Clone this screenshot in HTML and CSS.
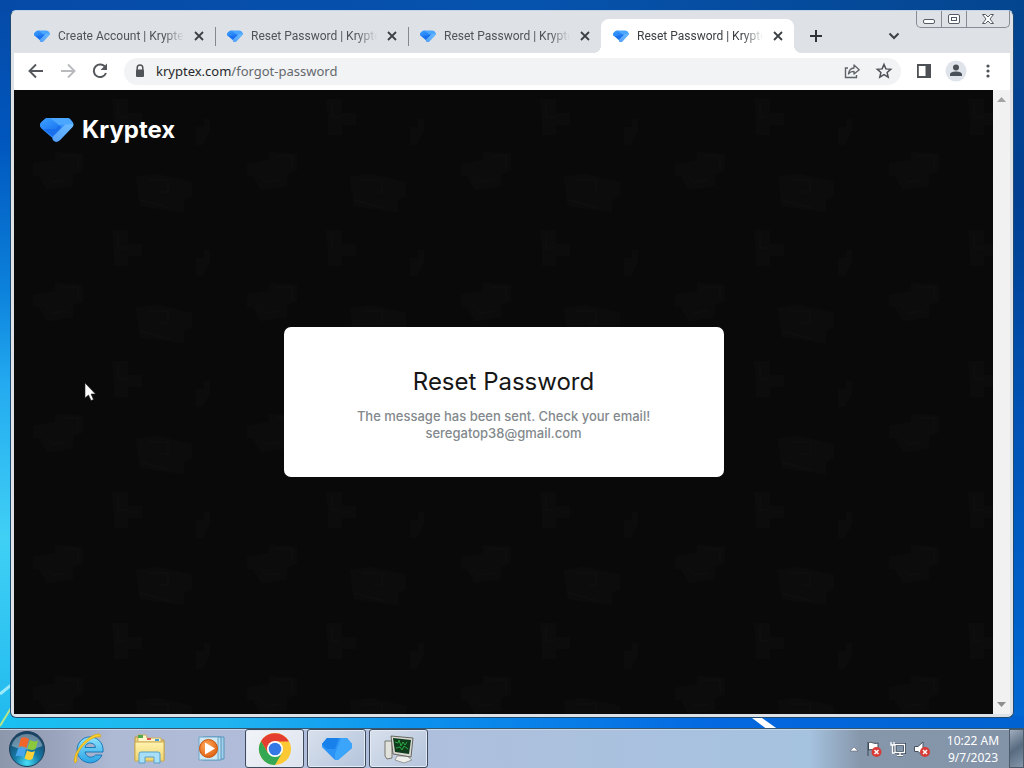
FILE: index.html
```html
<!DOCTYPE html>
<html lang="en">
<head>
<meta charset="utf-8">
<title>Reset Password | Kryptex</title>
<link rel="stylesheet" href="styles.css">
</head>
<body>
<svg class="defs" width="0" height="0" aria-hidden="true">
  <defs>
    <linearGradient id="kr" x1="1" y1="0" x2="0" y2="1"><stop offset="0" stop-color="#6abcff"/><stop offset="1" stop-color="#559ffb"/></linearGradient>
    <linearGradient id="kl" x1="0" y1="0" x2="1" y2="1"><stop offset="0" stop-color="#3fa2ff"/><stop offset="1" stop-color="#1b76f2"/></linearGradient>
    <symbol id="kryptex" viewBox="0 0 34 26">
      <path d="M7 1h20q2 0 3 1l2.500 3q2 2.500 0 5L20 23q-3 3-6 1-1.500-1-1.500-3L2 12q-2-2-2-4 0-1.500 1.500-3L5 2q1-1 2-1z" fill="#2f8ffc"/>
      <path d="M1 10q1 2 4 2h10l4-4 3 3-9 9z" fill="#1a6fec"/>
      <path d="M5 2q1-1 2-1h5l7 7-4 4H5q-5 0-5-4 0-1.500 1.500-3z" fill="url(#kl)"/>
      <path d="M10 1h17q2 0 3 1l2.500 3q1 1 .5 2.500L19 8z" fill="#4ba6ff"/>
      <path d="M33.300 7q.2 1.500-.8 3L20 23q-3 3-6 1-3-2.500 0-5.500L25 7.500z" fill="url(#kr)"/>
    </symbol>
    <symbol id="cross" viewBox="0 0 16 16"><path d="M4 4l8 8M12 4l-8 8" stroke="#3c4043" stroke-width="1.8" fill="none"/></symbol>
    <radialGradient id="orb" cx=".5" cy=".9" r=".8"><stop offset="0" stop-color="#48e0f8"/><stop offset=".45" stop-color="#167ba8"/><stop offset="1" stop-color="#174465"/></radialGradient>
    <radialGradient id="play" cx=".4" cy=".35" r=".7"><stop offset="0" stop-color="#ffad5c"/><stop offset="1" stop-color="#df5c0e"/></radialGradient>
    <linearGradient id="ie" x1="0" y1="0" x2="0" y2="1"><stop offset="0" stop-color="#8fe4ff"/><stop offset="1" stop-color="#2aa3e4"/></linearGradient>
    <linearGradient id="fold" x1="0" y1="0" x2="0" y2="1"><stop offset="0" stop-color="#fff3b0"/><stop offset="1" stop-color="#f0d46c"/></linearGradient>
  </defs>
</svg>

<main class="window">
  <div class="caption">
    <button class="cap" aria-label="Minimize"><svg width="14" height="12"><rect x="1.500" y="6.500" width="11" height="4" rx="1.500" fill="#fff" stroke="#555b66"/></svg></button>
    <button class="cap" aria-label="Restore"><svg width="14" height="12"><rect x="1.500" y="1.500" width="11" height="9" rx="1.500" fill="#fff" stroke="#555b66"/><rect x="4.500" y="4.500" width="5" height="3" fill="#fff" stroke="#555b66"/></svg></button>
    <button class="cap cap-close" aria-label="Close"><svg width="14" height="12"><path d="M1.500 1.500h3L7 4l2.500-2.500h3L9 6l3.500 4.500h-3L7 8l-2.500 2.500h-3L5 6z" fill="#fff" stroke="#555b66"/></svg></button>
  </div>
  <div class="tabs">
    <div class="tab"><svg class="fav"><use href="#kryptex"/></svg><span class="title">Create Account | Kryptex</span><button class="close" aria-label="Close tab"><svg width="16" height="16"><use href="#cross"/></svg></button></div>
    <div class="tab"><svg class="fav"><use href="#kryptex"/></svg><span class="title">Reset Password | Kryptex</span><button class="close" aria-label="Close tab"><svg width="16" height="16"><use href="#cross"/></svg></button></div>
    <div class="tab last"><svg class="fav"><use href="#kryptex"/></svg><span class="title">Reset Password | Kryptex</span><button class="close" aria-label="Close tab"><svg width="16" height="16"><use href="#cross"/></svg></button></div>
    <div class="tab active"><svg class="fav"><use href="#kryptex"/></svg><span class="title">Reset Password | Kryptex</span><button class="close" aria-label="Close tab"><svg width="16" height="16"><use href="#cross"/></svg></button></div>
    <button class="newtab" aria-label="New tab"><svg width="16" height="16"><path d="M8 2v12M2 8h12" stroke="#303338" stroke-width="2"/></svg></button>
    <button class="search" aria-label="Search tabs"><svg width="16" height="16"><path d="M3.500 5.500L8 10l4.500-4.500" fill="none" stroke="#3c4043" stroke-width="2"/></svg></button>
  </div>
  <div class="toolbar">
    <button aria-label="Back"><svg width="20" height="20"><path d="M17 10H4M10 3.500L3.500 10l6.500 6.500" fill="none" stroke="#54585d" stroke-width="1.900"/></svg></button>
    <button aria-label="Forward"><svg width="20" height="20"><path d="M3 10h13M10 3.500l6.500 6.500-6.500 6.500" fill="none" stroke="#b8babd" stroke-width="1.900"/></svg></button>
    <button aria-label="Reload"><svg width="20" height="20"><path d="M15.500 6.500A6.300 6.300 0 1 0 16 12" fill="none" stroke="#54585d" stroke-width="2"/><path d="M17 2.500V9h-6.500z" fill="#54585d"/></svg></button>
    <div class="omnibox">
      <svg width="16" height="16" aria-hidden="true"><path d="M5.200 7V4.800a2.800 2.800 0 0 1 5.600 0V7" fill="none" stroke="#505357" stroke-width="1.500"/><rect x="4" y="6.500" width="8" height="7.500" rx="1" fill="#505357"/></svg>
      <span class="url">kryptex.com<span class="path">/forgot-password</span></span>
      <button aria-label="Share"><svg width="18" height="18"><path d="M5 6H2.500v9.500h11V13" fill="none" stroke="#5f6368" stroke-width="1.400"/><path d="M5.500 12c.4-4 2.500-5.700 5.500-6V3l5.200 4.700L11 12V9.300c-2.500 0-4.200.7-5.500 2.700z" fill="none" stroke="#5f6368" stroke-width="1.300" stroke-linejoin="round"/></svg></button>
      <button aria-label="Bookmark"><svg width="18" height="18"><path d="M9 2.500l1.900 4.400 4.800.4-3.600 3.200 1.100 4.700L9 12.700l-4.200 2.500 1.100-4.700-3.600-3.200 4.800-.4z" fill="none" stroke="#4d5156" stroke-width="1.500"/></svg></button>
    </div>
    <button aria-label="Side panel"><svg width="18" height="18"><path d="M2.900 3h12.200v12H2.900z" fill="none" stroke="#4d5156" stroke-width="1.800"/><path d="M10.500 3H15v12h-4.500z" fill="#4d5156"/></svg></button>
    <button aria-label="Profile"><svg width="22" height="22"><circle cx="11" cy="11" r="10.500" fill="#dfe3ea"/><circle cx="11" cy="7.500" r="3" fill="#4a5057"/><path d="M5 16v-1.500c0-2.200 3.500-3 6-3s6 .8 6 3V16z" fill="#4a5057"/></svg></button>
    <button aria-label="Menu"><svg width="16" height="16"><g fill="#4d5156"><circle cx="8" cy="3" r="1.600"/><circle cx="8" cy="8" r="1.600"/><circle cx="8" cy="13" r="1.600"/></g></svg></button>
  </div>
  <div class="viewport">
    <section class="page">
      <svg class="pattern" aria-hidden="true">
        <defs><pattern id="tile" width="214" height="131" patternUnits="userSpaceOnUse" x="14" y="60">
          <g fill="#0c0c0c"><path d="M5 14l22-4V2l28 2v16l-10 4v12l-26 4-8-14H5z"/><path d="M108 27l20-3 36 8v14l-8 4v12l-44-6z"/><path d="M84 80h16v14h14v12h-14v10h-14V98z"/><path d="M168 108h8v-8h6v12l-8 14h-6z"/></g>
          <g fill="none" stroke="#0f0f0f"><path d="M34 6h16v12M16 24l8 8 14-2M120 30h20v12h-8M112 50l30 8M90 84v14h8"/></g>
        </pattern></defs>
        <rect width="100%" height="100%" fill="url(#tile)"/>
      </svg>
      <a class="brand" href="#"><svg width="34" height="26" aria-hidden="true"><use href="#kryptex"/></svg><span>Kryptex</span></a>
      <div class="center">
        <div class="card">
          <h1>Reset Password</h1>
          <p>The message has been sent. Check your email!<br>seregatop38@gmail.com</p>
        </div>
      </div>
    </section>
    <div class="scroll" aria-hidden="true"><svg width="9" height="5"><path d="M0 5l4.500-5L9 5z" fill="#a3a3a3"/></svg><svg width="9" height="5"><path d="M0 0l4.500 5L9 0z" fill="#8d8d8d"/></svg></div>
  </div>
</main>

<footer class="taskbar">
  <button class="start" aria-label="Start"><svg width="38" height="38" viewBox="0 0 38 38"><circle cx="19" cy="19" r="17.500" fill="url(#orb)" stroke="#1d3d58"/><path d="M3.500 16a16 16 0 0 1 31 0q-16 7-31 0z" fill="#fff" opacity=".35"/><path d="M13 8q4-2 8 1l-2.500 9q-4-3-8-1z" fill="#f0652a"/><path d="M22 10q4 2.500 8 .5L27.500 19q-4 2-8-.5z" fill="#8cc83c"/><path d="M10 18.500q4-2 8 1l-2.500 8q-4-3-8-1z" fill="#47a5ee"/><path d="M19 20.500q4 2.500 8 .5l-2.500 8q-4 2-8-.5z" fill="#fbd139"/></svg></button>
  <button class="pin" aria-label="Internet Explorer"><svg width="34" height="34" viewBox="0 0 34 34"><path d="M30 23A13 13 0 1 1 31 16.500V20H13c1 6 8 6.500 10.500 3zM13 15.500h10.500c-.8-6-9.500-6-10.500 0z" fill="url(#ie)" stroke="#1878b8"/><path d="M3 31C0 25 8 12 17 6 24 1 30 1 28.500 5 25 4 20 6 15 10 9 15 3 23 5 29z" fill="#fbd12e" stroke="#d5a00f" stroke-width=".7"/></svg></button>
  <button class="pin" aria-label="Windows Explorer"><svg width="34" height="34" viewBox="0 0 34 34"><path d="M2 5h10l2 3h17v20H2z" fill="#e9d07b" stroke="#bc9846"/><path d="M5 3h8l1 3h14v4H5z" fill="#fff5ca" stroke="#cfb15d"/><path d="M5 3h5v3H5z" fill="#4ca94d"/><path d="M14 6h4v2h-4z" fill="#d55"/><path d="M22 7h4v2h-4z" fill="#47a0d6"/><path d="M2 10h29v19H2z" fill="url(#fold)" stroke="#ccaa51"/><path d="M6 31V22q0-2 2-2h17q2 0 2 2v9h-6v-6h-9v6z" fill="#a8dff7" stroke="#579fc8"/></svg></button>
  <button class="pin" aria-label="Media Player"><svg width="34" height="34" viewBox="0 0 34 34"><path d="M12 5h18v22H12z" fill="#9fd1ec" stroke="#5994ba"/><path d="M9 5h18v23H9z" fill="#b7def2" stroke="#5994ba"/><path d="M5 5h19v23H5z" fill="#cee9f6" stroke="#6fa5c6"/><circle cx="14.500" cy="16.500" r="9" fill="url(#play)" stroke="#c9540c"/><path d="M11 10.500l10 6-10 6z" fill="#fff"/></svg></button>
  <div class="running">
    <button class="app current" aria-label="Google Chrome"><svg width="34" height="34" viewBox="0 0 34 34"><circle cx="17" cy="17" r="16" fill="#fcc934"/><path d="M3.100 9A16 16 0 0 0 17 33l7-12-7 2-7-2z" fill="#34a853"/><path d="M17 9.500h13.900A16 16 0 0 0 3.100 9l7 12z" fill="#e43e30"/><circle cx="17" cy="17" r="8" fill="#fff"/><circle cx="17" cy="17" r="6.300" fill="#3478e5"/></svg></button>
    <button class="app" aria-label="Kryptex"><svg width="32" height="24" viewBox="0 0 32 24"><path d="M6 1h20l5 6v4L17 23h-3L1 10V7z" fill="#2a93f5"/><path d="M6 1h12l-4 11H6L1 7z" fill="#1780ea"/><path d="M20 1h6l5 6v4L17 23h-3v-6z" fill="#3ba4fb"/></svg></button>
    <button class="app" aria-label="System monitor"><svg width="34" height="30" viewBox="0 0 34 30"><path d="M3 7h7v17l-5 1-2-3z" fill="#e2e2dc" stroke="#77776f"/><path d="M15 22h10l5 4-8 3-9-3z" fill="#eeeeea" stroke="#999"/><path d="M9 2l22 2-2 19-18-3z" fill="#d8d8d2" stroke="#66665f"/><path d="M11 4l18 2-2 14-14-2z" fill="#103c1c"/><path d="M13 8l3 1 1-3 2 6 2-4 2 3 2-3M14 14l4-1 2 3 2-4 4 3" stroke="#2ba845" fill="none"/></svg></button>
  </div>
  <div class="tray">
    <button aria-label="Show hidden icons"><svg width="10" height="6"><path d="M1 5l4-4 4 4z" fill="#fff" stroke="#556" stroke-width=".5"/></svg></button>
    <button aria-label="Action Center"><svg width="18" height="18"><path d="M3 16V2M3.500 3c3-2 5 1.500 9.500 0v7c-4.500 1.500-6-1.500-9.500 0z" fill="#fff" stroke="#3b4654"/><circle cx="11.500" cy="12" r="5" fill="#d83a35"/><path d="M9.500 10l4 4M13.500 10l-4 4" stroke="#fff" stroke-width="1.500"/></svg></button>
    <button aria-label="Network"><svg width="18" height="18"><path d="M6 4.500h9.500v8H6zM8 15.500h6M11 13v2" fill="#8194a8" stroke="#344354" stroke-width="3"/><path d="M6 4.500h9.500v8H6zM8 15.500h6M11 13v2M2 2v3h3V2M3.500 5v8H6" fill="none" stroke="#fff" stroke-width="1.300"/></svg></button>
    <button aria-label="Volume"><svg width="18" height="18"><path d="M1.500 6.500H5l5-4.500v14l-5-4.500H1.500z" fill="#fff" stroke="#47515e"/><circle cx="12" cy="12" r="5" fill="#d83a35"/><path d="M10 10l4 4M14 10l-4 4" stroke="#fff" stroke-width="1.500"/></svg></button>
    <div class="clock"><time>10:22 AM</time><span>9/7/2023</span></div>
  </div>
  <button class="peek" aria-label="Show desktop"></button>
</footer>

<svg class="wall" aria-hidden="true"><path d="M0 36L11 27" stroke="#9beafb" stroke-width="3"/><path d="M0 68l11-18" stroke="#b4e58c" stroke-width="2"/></svg>
<svg class="streak" aria-hidden="true"><path d="M0 0h10l17 12H16z" fill="#fff"/></svg>
<svg class="pointer" width="14" height="20" aria-hidden="true"><path d="M1 1v15l3.500-3 2.500 5.500 2.500-1L7 12h4.500z" fill="#fff" stroke="#222" stroke-width=".6"/></svg>
</body>
</html>
```
FILE: styles.css
```css
* { box-sizing: border-box; }
body {
  margin: 0;
  height: 100vh;
  display: flex;
  flex-direction: column;
  overflow: hidden;
  font-family: "Noto Sans", "Open Sans", sans-serif;
  font-size: 12px;
  background:
    linear-gradient(90deg, #19c0f0 0, #20b4f0 22%, #0c92ee 40%, #0468e0 70%, #0062d0 100%) 0 100% / 100% 52px no-repeat,
    linear-gradient(90deg, #064aa7, #0653ae 50%, #04458f) 0 0 / 100% 12px no-repeat,
    linear-gradient(#04458f 0%, #003f91 25%, #0053b5 55%, #0068d4 94%) 100% 0 / 50% 100% no-repeat,
    linear-gradient(#064aa7 0%, #0056bd 18%, #0c82dc 38%, #23aaf0 50%, #40d0f5 70%, #20b9ee 95%);
}
button { border: 0; padding: 0; background: none; display: flex; align-items: center; justify-content: center; }
svg { display: block; flex: none; }
.defs { position: absolute; }
.window {
  position: relative;
  flex: 1;
  min-height: 0;
  margin: 10px 10px 10px;
  padding: 0 3px 3px;
  display: flex;
  flex-direction: column;
  border: 1px solid #1e4a70;
  border-top-color: #c5d5e8;
  border-radius: 6px;
  background: #dee1e6;
}
.caption {
  position: absolute;
  top: 0;
  right: 3px;
  display: flex;
  height: 17px;
  border: 1px solid #868c95;
  border-top: 0;
  border-radius: 0 0 5px 5px;
}
.cap { width: 25px; border-right: 1px solid #868c95; }
.cap-close { width: 42px; border-right: 0; }
.tabs { display: flex; height: 42px; padding: 8px 8px 0; align-items: stretch; }
.tab {
  position: relative;
  flex: 0 1 193px;
  min-width: 0;
  display: flex;
  align-items: center;
  padding: 0 9px 0 12px;
  gap: 8px;
  color: #505357;
}
.tab::after { content: ""; position: absolute; right: -1px; top: 8px; width: 1px; height: 19px; background: #85898e; }
.tab.last::after { display: none; }
.tab.active { background: #fff; border-radius: 8px 8px 0 0; color: #3c4043; }
.tab.active::before, .tab.active::after {
  content: "";
  position: absolute;
  top: auto;
  bottom: 0;
  width: 8px;
  height: 8px;
}
.tab.active::before { left: -8px; background: radial-gradient(circle at 0 0, transparent 8px, #fff 8px); }
.tab.active::after { right: -8px; background: radial-gradient(circle at 100% 0, transparent 8px, #fff 8px); }
.fav { width: 16px; height: 13px; }
.title {
  flex: 1;
  overflow: hidden;
  white-space: nowrap;
  font: 12px/18px Roboto, sans-serif;
  -webkit-mask-image: linear-gradient(90deg, #000 84%, transparent);
  mask-image: linear-gradient(90deg, #000 84%, transparent);
}
.close { width: 14px; height: 16px; }
.newtab { width: 28px; margin-left: 8px; }
.search { width: 28px; margin-left: auto; margin-right: 94px; }
.toolbar { display: flex; align-items: center; height: 37px; padding: 0 6px 1px; background: #fff; }
.toolbar button { width: 32px; height: 28px; }
.omnibox {
  flex: 1;
  display: flex;
  align-items: center;
  height: 27px;
  margin: 0 7px 0 8px;
  padding: 0 1px 0 8px;
  border-radius: 14px;
  background: #f1f3f4;
}
.url { flex: 1; margin-left: 8px; font-size: 13px; line-height: 20px; color: #26282b; }
.path { color: #64686d; }
.viewport { flex: 1; min-height: 0; display: flex; }
.page { position: relative; flex: 1; display: flex; flex-direction: column; background: #090909; }
.pattern { position: absolute; inset: 0; width: 100%; height: 100%; }
.brand {
  position: relative;
  align-self: flex-start;
  display: flex;
  align-items: center;
  gap: 8px;
  margin: 24px 0 0 26px;
  height: 32px;
  color: #fff;
  text-decoration: none;
  font: 700 24px/32px Inter, sans-serif;
}
.center { position: relative; flex: 1; display: flex; align-items: center; justify-content: center; padding-bottom: 56px; }
.card { width: 440px; max-width: 90%; padding: 39px 24px 35px; border-radius: 7px; background: #fff; text-align: center; }
h1 { margin: 0 0 10px; font: 400 24px/32px Inter, sans-serif; color: #161616; }
p { margin: 0; font: 500 13px/17px Inter, sans-serif; color: #83898c; }
.scroll { width: 17px; display: flex; flex-direction: column; align-items: center; justify-content: space-between; padding: 7px 0; background: #f1f1f1; }
.taskbar {
  display: flex;
  height: 40px;
  border-top: 1px solid #34576f;
  box-shadow: inset 0 1px #c9d8e8;
  background: linear-gradient(90deg, #8d97ac 0, #98a2ba 5%, #aeb9d4 11%, #b0bddb 30%, #abc1de 55%, #a5c2df 79%, #8797ab 84%, #8293a8 100%);
}
.start { width: 38px; margin: 0 12px 0 8px; }
.pin { width: 61px; }
.running { display: flex; gap: 3px; margin-left: 4px; }
.app { width: 59px; border: 1px solid #3e4b5d; border-radius: 3px; box-shadow: inset 0 0 0 1px #e4ebf5; background: linear-gradient(135deg, #d8e0ec, #b4c4dc); }
.current { background: linear-gradient(135deg, #f2f4f8, #dce3ee); }
.tray { display: flex; align-items: center; gap: 6px; margin-left: auto; color: #fff; }
.clock { display: flex; flex-direction: column; align-items: center; width: 72px; line-height: 17px; }
.peek { width: 15px; border: 1px solid #4e5b6b; background: linear-gradient(145deg, #9fadbd, #586b80 50%, #8496a9); }
.wall { position: absolute; left: 0; bottom: 40px; width: 10px; height: 70px; }
.streak { position: absolute; left: 752px; bottom: 40px; width: 28px; height: 10px; }
.pointer { position: absolute; left: 84px; top: 382px; }
```
